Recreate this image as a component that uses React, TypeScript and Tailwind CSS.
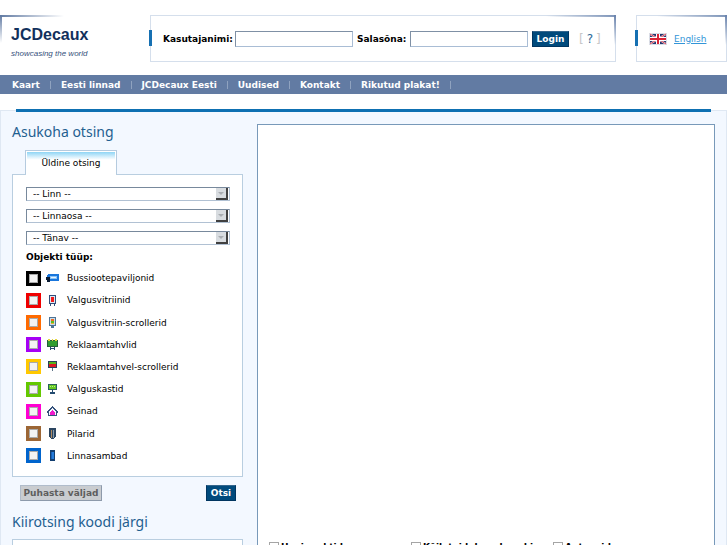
import type { ReactNode } from "react";

const navItems = ["Kaart", "Eesti linnad", "JCDecaux Eesti", "Uudised", "Kontakt", "Rikutud plakat!"];

const selects = [
  { id: "city", name: "Linn" },
  { id: "district", name: "Linnaosa" },
  { id: "street", name: "Tänav" },
];

const objectTypes: { id: string; label: string; box: string; icon: ReactNode }[] = [
  {
    id: "bus",
    label: "Bussiootepaviljonid",
    box: "border-black",
    icon: (
      <>
        <path d="M2 2h11v2H2z" fill="#1976dc" />
        <path d="M1 3h3v2H1z" fill="#1976dc" />
        <path d="M4 4h7v3H4z" fill="#8cc5f8" />
        <path d="M4 7h8v2H4zM11 3h2v6h-2z" fill="#1976dc" />
        <path d="M0 5h4v5H1z" fill="#0b1c33" />
        <path d="M5 5h5v1H5z" fill="#e8f4ff" />
      </>
    ),
  },
  {
    id: "vitrine",
    label: "Valgusvitriinid",
    box: "border-[#ef0000]",
    icon: (
      <>
        <path d="M3 1h7v9H9v2H8v-2H5v2H4v-2H3z" fill="#304d79" />
        <path d="M4 2h5v7H4z" fill="#dce9f5" />
        <path d="M5 3h3v5H5z" fill="#f21919" />
      </>
    ),
  },
  {
    id: "vitrine-scroller",
    label: "Valgusvitriin-scrollerid",
    box: "border-[#ff6a00]",
    icon: (
      <>
        <path d="M3 1h7v9H8v2H5v-2H3z" fill="#4d7396" />
        <path d="M4 2h5v7H4z" fill="#c9dce9" />
        <path d="M5 3h3v2H5z" fill="#f06a20" />
        <path d="M5 5h3v2H5z" fill="#62bf20" />
        <path d="M5 7h3v1H5z" fill="#f2ad32" />
      </>
    ),
  },
  {
    id: "board",
    label: "Reklaamtahvlid",
    box: "border-[#a600f5]",
    icon: (
      <>
        <path d="M1 2h11v7H1z" fill="#25603b" />
        <path d="M2 3h9v5H2z" fill="#2f9e30" />
        <path d="M2 1h2v2H2zM6 1h1v2H6zM9 1h2v2H9z" fill="#e5d640" />
        <path d="M4 9h1v3H4zM8 9h1v3H8zM5 10h3v1H5z" fill="#244b70" />
      </>
    ),
  },
  {
    id: "board-scroller",
    label: "Reklaamtahvel-scrollerid",
    box: "border-[#ffc800]",
    icon: (
      <>
        <path d="M2 1h9v7H2z" fill="#2b4057" />
        <path d="M3 2h7v2H3z" fill="#55b51b" />
        <path d="M3 4h7v3H3z" fill="#dc1824" />
        <path d="M6 8h1v3H6z" fill="#5e7387" />
      </>
    ),
  },
  {
    id: "lightbox",
    label: "Valguskastid",
    box: "border-[#64c800]",
    icon: (
      <>
        <path d="M2 1h9v6H2z" fill="#28615b" />
        <path d="M3 2h7v4H3z" fill="#64c820" />
        <path d="M4 3h1v1H4zM6 3h1v1H6zM8 3h1v1H8z" fill="#b9ed8c" />
        <path d="M6 7h1v2h2v2H4V9h2z" fill="#244b70" />
      </>
    ),
  },
  {
    id: "wall",
    label: "Seinad",
    box: "border-[#ff00d2]",
    icon: (
      <>
        <path d="M6 1h1v1h1v1h1v1h1v1h1v1h1v2h-1v3H2V8H1V6h1V5h1V4h1V3h1V2h1z" fill="#35517b" />
        <path d="M6 3h1v1h1v1h1v1h1v4H3V6h1V5h1V4h1z" fill="#f4f8ff" />
        <path d="M6 5h1v1h1v1h1v3H4V7h1V6h1z" fill="#ee1acb" />
      </>
    ),
  },
  {
    id: "pillar",
    label: "Pilarid",
    box: "border-[#9c6635]",
    icon: (
      <>
        <path d="M3 1h7v9H9v1H8v1H5v-1H4v-1H3z" fill="#2b4560" />
        <path d="M5 3h1v8H5z" fill="#b08a60" />
        <path d="M7 3h1v8H7z" fill="#859aab" />
      </>
    ),
  },
  {
    id: "column",
    label: "Linnasambad",
    box: "border-[#0064cd]",
    icon: (
      <>
        <path d="M4 1h5v11H4z" fill="#123e70" />
        <path d="M5 3h3v7H5z" fill="#267cda" />
        <path d="M5 3h1v7H5z" fill="#1560b8" />
      </>
    ),
  },
];

const layers = ["Huvipunktid", "Kõik toidukauplused ja kaubanduskeskused", "Apteegid"];

function Corner() {
  return (
    <>
      <span className="absolute -top-px -right-px h-0.5 w-[70px] bg-linear-to-l from-[#7d94b8] to-transparent" />
      <span className="absolute -top-px -right-px h-[30px] w-0.5 bg-linear-to-b from-[#6b84ad] to-transparent" />
      <span className="absolute top-3.5 -left-0.5 h-4 w-[3px] bg-[#1670b2]" />
    </>
  );
}

function Login() {
  const field = "h-4 w-[118px] border border-[#a9bdd5] border-t-[#7f90a5] border-l-[#7f90a5] bg-white px-1 outline-none";
  return (
    <form className="relative flex h-[47px] flex-1 items-center border border-[#d5dfec] pl-3" onSubmit={(e) => e.preventDefault()}>
      <Corner />
      <label htmlFor="user" className="w-[72px] shrink-0 font-bold">Kasutajanimi:</label>
      <input id="user" className={field} />
      <label htmlFor="password" className="w-[57px] shrink-0 pl-1 font-bold">Salasõna:</label>
      <input id="password" type="password" className={field} />
      <button className="ml-1 h-4 w-[37px] shrink-0 border border-[#003560] border-t-[#33658c] bg-[#004a7c] text-center font-bold text-white">
        Login
      </button>
      <a href="#help" aria-label="Abi" className="ml-2.5 flex items-center gap-[3px] text-xs text-[#2d6797]">
        <span className="text-[#c7c7c7]">[</span>?<span className="text-[#c7c7c7]">]</span>
      </a>
    </form>
  );
}

function Flag() {
  return (
    <svg viewBox="0 0 18 12" className="h-3 w-[18px]" aria-hidden="true">
      <path d="M0 0h18v12H0z" fill="#d8dce5" />
      <path d="M1 1h16v10H1z" fill="#26386f" />
      <path d="M1 1l16 10M17 1L1 11" stroke="#f1e6ec" strokeWidth="2" />
      <path d="M1 1l16 10M17 1L1 11" stroke="#d94050" strokeWidth="1" />
      <path d="M1 6h16M9 1v10" stroke="#fff" strokeWidth="4" />
      <path d="M1 6h16M9 1v10" stroke="#dc2436" strokeWidth="2" />
    </svg>
  );
}

function Header() {
  return (
    <header className="flex items-start pt-[15px] pb-[13px]">
      <div className="relative h-[47px] w-[150px] shrink-0 pt-[11px] pl-[11px]">
        <span className="absolute top-0 left-0 h-0.5 w-16 bg-linear-to-r from-[#627ba3] to-transparent" />
        <span className="absolute top-0 left-0 h-7 w-0.5 bg-linear-to-b from-[#627ba3] to-transparent" />
        <a href="#home" className="block font-['Liberation_Sans',sans-serif] text-[#12305c]">
          <strong className="block text-base leading-[18px]">JCDecaux</strong>
          <em className="block pt-1 text-[8px] leading-3 text-[#35517b]">showcasing the world</em>
        </a>
      </div>
      <Login />
      <div className="relative ml-5 flex h-[47px] w-[91px] items-center border border-[#d5dfec] pl-3">
        <Corner />
        <Flag />
        <a href="#en" className="ml-[7px] text-[#3295d8] underline">English</a>
      </div>
    </header>
  );
}

function SearchPanel() {
  const heading = "font-['Noto_Sans','DejaVu_Sans',sans-serif] text-sm leading-[18px] text-[#1f6090]";
  return (
    <section className="w-[231px] shrink-0">
      <h2 className={`pt-3 ${heading}`}>Asukoha otsing</h2>
      <div className="ml-[13px] mt-[9px] w-[92px] border border-b-0 border-[#b5cbdf] bg-white p-px pb-0">
        <button className="block h-[22px] w-full bg-linear-to-b from-[#8ed5f5] to-white to-35% text-center">Üldine otsing</button>
      </div>
      <form onSubmit={(e) => e.preventDefault()}>
        <div className="border border-[#b9cee0] bg-white px-3 pt-3 pb-[9px]">
          <div className="-mt-[13px] mb-3 ml-px h-px w-[90px] bg-white" />
          <div className="flex flex-col gap-2 pl-px">
            {selects.map((s) => (
              <div key={s.id} className="relative h-[14px] w-[204px] border border-[#b1c1d3] border-t-[#78899c] border-l-[#78899c]">
                <select id={s.id} aria-label={s.name} className="block h-full w-full appearance-none bg-white pl-1.5 leading-3 outline-none">
                  <option>{`-- ${s.name} --`}</option>
                </select>
                <span className="pointer-events-none absolute top-0 right-px flex h-3 w-3 items-center justify-center border-r-2 border-b-2 border-[#404040] bg-[#d8dce0]">
                  <span className="h-0 w-0 border-x-3 border-t-3 border-x-transparent border-t-[#a9adb2]" />
                </span>
              </div>
            ))}
          </div>
          <h3 className="mt-[5px] pl-px leading-[14px] font-bold">Objekti tüüp:</h3>
          <ul className="mt-[3px] grid h-[200px] auto-rows-fr pl-px">
            {objectTypes.map((t) => (
              <li key={t.id} className="flex items-center">
                <input
                  id={t.id}
                  type="checkbox"
                  className={`size-[15px] shrink-0 appearance-none border-3 bg-[#f3f3f3] inset-ring inset-ring-black/30 checked:bg-[#7c8da5] ${t.box}`}
                />
                <svg viewBox="0 0 13 13" className="ml-[5px] size-[13px] shrink-0" shapeRendering="crispEdges" aria-hidden="true">{t.icon}</svg>
                <label htmlFor={t.id} className="pl-2">{t.label}</label>
              </li>
            ))}
          </ul>
        </div>
        <div className="flex justify-between pt-2 pr-[7px] pl-2">
          <button type="reset" className="h-4 w-[82px] border border-[#b0bccb] border-r-[#8d9aab] border-b-[#8d9aab] bg-[#c9ccd0] text-center font-bold text-[#5e5e5e]">
            Puhasta väljad
          </button>
          <button className="h-4 w-[30px] border border-[#003560] border-t-[#33658c] bg-[#004a7c] text-center font-bold text-white">
            Otsi
          </button>
        </div>
      </form>
      <h2 className={`pt-3 ${heading}`}>Kiirotsing koodi järgi</h2>
      <div className="mt-2 h-10 border border-[#b9cee0] bg-white" />
    </section>
  );
}

export default function App() {
  return (
    <div className="h-screen overflow-hidden bg-white font-['DejaVu_Sans',Verdana,sans-serif] text-[9px] leading-3 text-black">
      <Header />
      <nav className="flex h-[19px] items-center bg-[#627ba3] pl-3 font-bold text-white">
        {navItems.map((item) => (
          <div key={item} className="flex items-center">
            <a href="#page">{item}</a>
            <span className="mx-2.5 h-2 w-px bg-[#8fa2bf]" />
          </div>
        ))}
      </nav>
      <div className="relative mx-4 mt-[15px] h-[3px] bg-[#0e70b2]" />
      <main className="-mt-0.5 flex gap-3.5 border border-b-0 border-[#dfe8f3] bg-[#f3f8ff] px-[11px]">
        <SearchPanel />
        <section className="mt-[13px] min-w-0 flex-1 border border-[#7899b9] bg-white px-[11px]">
          <div className="h-[416px]" />
          <div className="flex">
            {layers.map((layer) => (
              <label key={layer} className="flex w-[142px] items-start gap-0.5 pr-3 font-bold">
                <input type="checkbox" className="mt-px size-2.5 shrink-0 appearance-none border border-[#a5a5a5] bg-white checked:bg-[#7c8da5]" />
                <span>{layer}</span>
              </label>
            ))}
          </div>
        </section>
      </main>
    </div>
  );
}
